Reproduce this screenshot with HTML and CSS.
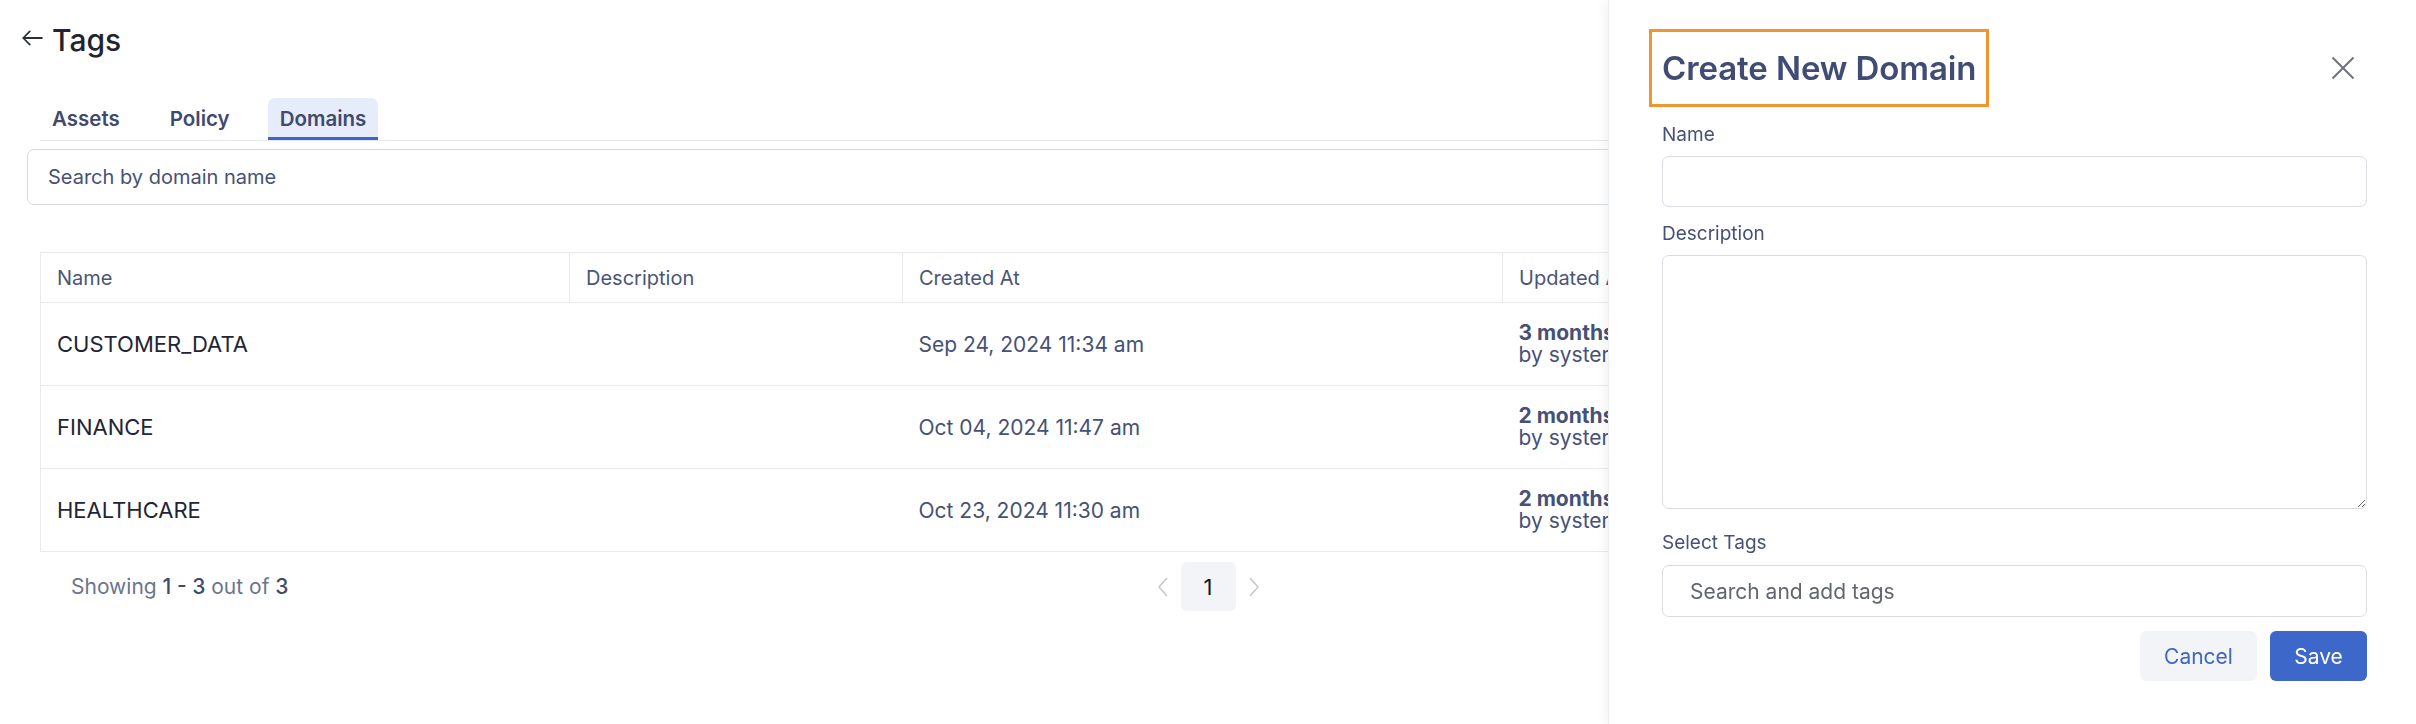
FILE: index.html
```html
<!DOCTYPE html>
<html lang="en">
<head>
<meta charset="utf-8">
<title>Tags - Domains</title>
<link rel="stylesheet" href="styles.css">
</head>
<body>
<div class="app">
  <header class="topbar">
    <svg class="back" width="22" height="18" viewBox="0 0 20 16" aria-hidden="true"><path d="M19 8H2M8 2L2 8l6 6" fill="none" stroke="#2b2f38" stroke-width="1.6" stroke-linecap="round" stroke-linejoin="round"/></svg>
    <h1 class="page-title">Tags</h1>
  </header>

  <nav class="tabs">
    <span class="tab">Assets</span>
    <span class="tab">Policy</span>
    <span class="tab active">Domains</span>
  </nav>

  <div class="search">Search by domain name</div>

  <div class="table-wrap">
    <table class="grid">
      <colgroup>
        <col class="c-name"><col class="c-desc"><col class="c-created"><col>
      </colgroup>
      <thead>
        <tr><th>Name</th><th>Description</th><th>Created At</th><th>Updated At</th></tr>
      </thead>
      <tbody>
        <tr><td class="name">CUSTOMER_DATA</td><td></td><td class="date">Sep 24, 2024 11:34 am</td><td class="upd"><b>3 months ago</b><span>by system</span></td></tr>
        <tr><td class="name">FINANCE</td><td></td><td class="date">Oct 04, 2024 11:47 am</td><td class="upd"><b>2 months ago</b><span>by system</span></td></tr>
        <tr><td class="name">HEALTHCARE</td><td></td><td class="date">Oct 23, 2024 11:30 am</td><td class="upd"><b>2 months ago</b><span>by system</span></td></tr>
      </tbody>
    </table>

    <div class="pager">
      <div class="showing">Showing <b>1 - 3</b> out of <b>3</b></div>
      <div class="pages">
        <svg class="chev" width="12" height="20" viewBox="0 0 12 20" aria-hidden="true"><path d="M10 1L2 10l8 9" fill="none" stroke="#c3c7ce" stroke-width="1.5"/></svg>
        <span class="page-num">1</span>
        <svg class="chev" width="12" height="20" viewBox="0 0 12 20" aria-hidden="true"><path d="M2 1l8 9-8 9" fill="none" stroke="#c3c7ce" stroke-width="1.5"/></svg>
      </div>
      <div></div>
    </div>
  </div>
</div>

<aside class="drawer">
  <div class="drawer-head">
    <h2 class="drawer-title">Create New Domain</h2>
    <svg class="close" width="24" height="24" viewBox="0 0 24 24" aria-hidden="true"><path d="M1.5 1.5l21 21M22.5 1.5l-21 21" fill="none" stroke="#6f737a" stroke-width="2"/></svg>
  </div>
  <form class="form">
    <label class="lbl">Name</label>
    <input class="field" type="text">
    <label class="lbl lbl-desc">Description</label>
    <textarea class="area"></textarea>
    <label class="lbl lbl-tags">Select Tags</label>
    <input class="field tags" type="text" placeholder="Search and add tags">
    <div class="actions">
      <button type="button" class="btn cancel">Cancel</button>
      <button type="button" class="btn save">Save</button>
    </div>
  </form>
</aside>
</body>
</html>
```
FILE: styles.css
```css
* { box-sizing: border-box; }
html, body { margin: 0; padding: 0; background: #fff; }
body {
  width: 2416px;
  height: 724px;
  overflow: hidden;
  font-family: Inter, "Noto Sans", "Liberation Sans", sans-serif;
  color: #4a5578;
}

.app { position: relative; }

.topbar {
  display: flex;
  align-items: center;
  gap: 9px;
  padding: 20px 0 0 21px;
  height: 60px;
}
.back { display: block; margin-top: -4px; }
.page-title {
  margin: 0;
  font-size: 30px;
  line-height: 40px;
  font-weight: 500;
  color: #1f2430;
}

.tabs {
  display: flex;
  gap: 26px;
  margin: 38px 0 0 40px;
  border-bottom: 1px solid #e6e8ec;
}
.tab {
  height: 42px;
  line-height: 41px;
  padding: 0 12px;
  font-size: 20.5px;
  font-weight: 600;
  color: #3f4a6e;
  border-bottom: 3px solid transparent;
  border-radius: 7px 7px 0 0;
}
.tab.active {
  background: #e6ecfa;
  border-bottom-color: #3b66c8;
}

.search {
  margin: 8px 27px 0 27px;
  height: 56px;
  border: 1px solid #d5d9df;
  border-radius: 7px;
  padding: 0 20px;
  line-height: 54px;
  font-size: 20px;
  color: #465175;
}

.table-wrap { margin: 47px 40px 0 40px; }
.grid {
  width: 100%;
  border-collapse: collapse;
  table-layout: fixed;
  border-left: 1px solid #e8eaee;
}
.c-name { width: 529px; }
.c-desc { width: 333px; }
.c-created { width: 600px; }
.grid th {
  height: 50px;
  text-align: left;
  padding: 0 16px;
  font-size: 20px;
  font-weight: 400;
  color: #4a5578;
  border-top: 1px solid #e8eaee;
  border-bottom: 1px solid #e8eaee;
  border-right: 1px solid #e8eaee;
}
.grid td {
  height: 83px;
  padding: 0 16px;
  border-bottom: 1px solid #e8eaee;
  vertical-align: middle;
}
.grid td.name { font-size: 22px; color: #1f2536; }
.grid td.date { font-size: 21px; color: #465175; }
.grid td.upd { font-size: 21px; color: #465175; line-height: 22px; }
.grid td.upd b { display: block; font-weight: 700; }
.grid td.upd span { display: block; }

.pager {
  display: grid;
  grid-template-columns: 1fr auto 1fr;
  align-items: center;
  margin-top: 10px;
  height: 49px;
}
.showing {
  padding-left: 31px;
  font-size: 21px;
  color: #6c7490;
}
.showing b { font-weight: 500; color: #3f4a6e; }
.pages {
  display: flex;
  align-items: center;
  gap: 12px;
}
.chev { display: block; }
.page-num {
  width: 55px;
  height: 49px;
  border-radius: 6px;
  background: #f2f4f7;
  display: flex;
  align-items: center;
  justify-content: center;
  font-size: 22px;
  color: #15181f;
}

.drawer {
  position: fixed;
  top: 0;
  right: 0;
  width: 808px;
  height: 724px;
  background: #fff;
  border-left: 1px solid #eceef1;
  box-shadow: -3px 0 10px rgba(20, 30, 50, 0.06);
  padding: 29px 49px 0 40px;
}
.drawer-head {
  display: flex;
  align-items: center;
  justify-content: space-between;
}
.drawer-title {
  margin: 0;
  border: 3px solid #f0962f;
  padding: 16px 10px;
  font-size: 33px;
  line-height: 40px;
  font-weight: 600;
  color: #404c74;
  letter-spacing: -0.1px;
}
.close { display: block; margin-right: 12px; }

.form {
  display: flex;
  flex-direction: column;
  margin: 16px 0 0 13px;
}
.lbl {
  font-size: 19px;
  line-height: 24px;
  color: #465175;
}
.field {
  margin-top: 9px;
  height: 51px;
  border: 1px solid #d9dce3;
  border-radius: 7px;
  padding: 0 18px;
  font: inherit;
  font-size: 21px;
  outline: none;
}
.lbl-desc { margin-top: 15px; }
.area {
  margin-top: 9px;
  height: 254px;
  border: 1px solid #d9dce3;
  border-radius: 7px;
  resize: vertical;
  font: inherit;
  outline: none;
}
.lbl-tags { margin-top: 22px; }
.tags { height: 52px; margin-top: 10px; padding-left: 27px; }
.tags::placeholder { color: #62666e; }
.actions {
  display: flex;
  justify-content: flex-end;
  gap: 13px;
  margin-top: 14px;
}
.btn {
  height: 50px;
  border: 0;
  border-radius: 6px;
  font-family: inherit;
  font-size: 21px;
  padding: 0;
}
.cancel { width: 117px; background: #f2f4f7; color: #3d66c6; }
.save { width: 97px; background: #3d67c9; color: #fff; }
```
